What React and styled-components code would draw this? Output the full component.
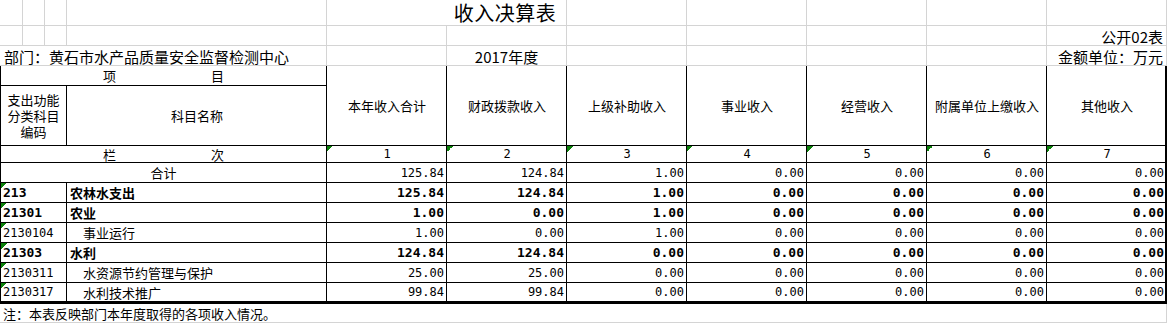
import React from 'react';
import styled, { createGlobalStyle, css } from 'styled-components';

const GRID = '#d4d4d4';
const INK = '#000';
const CJK = '"Noto Sans CJK SC", "Noto Sans", sans-serif';
const MONO = '"DejaVu Sans Mono", "Liberation Mono", monospace';

const GlobalStyle = createGlobalStyle`
  *, *::before, *::after { box-sizing: border-box; }
  html, body { margin: 0; padding: 0; background: #fff; }
  body { font-family: ${CJK}; color: #000; }
`;

const Sheet = styled.div`
  display: grid;
  width: 1167px;
  grid-template-columns: 23px 22px 22px 260px repeat(7, 120px);
  grid-template-rows: 26px 20px 20px 20px 60px 17px repeat(6, 20px) 21px 19px;
`;

const alignMap = { left: 'flex-start', right: 'flex-end', center: 'center' };

const Cell = styled.div`
  grid-column: span ${(p) => p.$span || 1};
  grid-row: span ${(p) => p.$rows || 1};
  display: flex;
  justify-content: ${(p) => alignMap[p.$align || 'center']};
  min-width: 0;
  overflow: hidden;
  white-space: nowrap;
  line-height: 1;
`;

const GridCell = styled(Cell)`
  align-items: flex-end;
  padding: 0 3px 1px ${(p) => (p.$padLeft != null ? p.$padLeft : 3)}px;
  font-size: 15px;
  border-bottom: 1px solid ${GRID};
  border-right: 1px solid ${(p) => (p.$open ? 'transparent' : GRID)};
`;

const Title = styled(GridCell)`
  font-size: 20px;
  font-weight: 400;
  line-height: 24px;
  letter-spacing: 0.5px;
  padding-bottom: 0;
  overflow: visible;
`;

const TableCell = styled(Cell)`
  align-items: center;
  font-size: 13px;
  padding: 0 ${(p) => (p.$last ? 1 : 2)}px 0 ${(p) => (p.$indent ? 16 : p.$first ? 2 : 3)}px;
  border-right: ${(p) => (p.$last ? 2 : 1)}px solid ${INK};
  border-bottom: ${(p) => (p.$foot ? 3 : 1)}px solid ${INK};
  ${(p) => p.$first && css`border-left: 1px solid ${INK};`}
  font-weight: ${(p) => (p.$bold ? 700 : 400)};
  ${(p) =>
    p.$tri &&
    css`
      background-image: linear-gradient(135deg, #0a800a 0 50%, transparent 50%);
      background-size: 6px 6px;
      background-repeat: no-repeat;
      background-position: 0 0;
    `}
`;

const Num = styled.span`
  font-family: ${MONO};
  font-size: ${(p) => (p.$bold ? 13 : 12)}px;
  font-weight: ${(p) => (p.$bold ? 700 : 400)};
`;

const Spread = styled.div`
  flex: 1;
  display: flex;
  justify-content: space-between;
  padding: 0 100px 0 100px;
`;

const Stack = styled.div`
  white-space: normal;
  text-align: center;
  line-height: 16px;
  font-size: 13px;
`;

const HeadLabel = styled.span`
  font-size: 13px;
`;

const Note = styled(Cell)`
  grid-column: 1 / -1;
  align-items: center;
  justify-content: flex-start;
  padding: 0 3px;
  font-size: 13px;
  border-bottom: 1px solid ${GRID};
  border-right: 1px solid ${GRID};
`;

const heads = ['本年收入合计', '财政拨款收入', '上级补助收入', '事业收入', '经营收入', '附属单位上缴收入', '其他收入'];

const Z = ['0.00', '0.00', '0.00', '0.00'];
const total = ['125.84', '124.84', '1.00', ...Z];
const rows = [
  { code: '213', name: '农林水支出', bold: true, v: ['125.84', '124.84', '1.00', ...Z] },
  { code: '21301', name: '农业', bold: true, v: ['1.00', '0.00', '1.00', ...Z] },
  { code: '2130104', name: '事业运行', v: ['1.00', '0.00', '1.00', ...Z] },
  { code: '21303', name: '水利', bold: true, v: ['124.84', '124.84', '0.00', ...Z] },
  { code: '2130311', name: '水资源节约管理与保护', v: ['25.00', '25.00', '0.00', ...Z] },
  { code: '2130317', name: '水利技术推广', v: ['99.84', '99.84', '0.00', ...Z] },
];

function EmptyGrid({ n }) {
  return Array.from({ length: n }, (_, i) => <GridCell key={i} />);
}

export default function App() {
  return (
    <>
      <GlobalStyle />
      <Sheet>
        {/* row 0 */}
        <EmptyGrid n={4} />
        <Title $span={2} $padLeft={120}>收入决算表</Title>
        <EmptyGrid n={5} />

        {/* row 1 */}
        <EmptyGrid n={10} />
        <GridCell $align="right">公开02表</GridCell>

        {/* row 2 */}
        <GridCell $span={4} $align="left" $padLeft={4}>部门：黄石市水产品质量安全监督检测中心</GridCell>
        <GridCell />
        <GridCell>2017年度</GridCell>
        <EmptyGrid n={4} />
        <GridCell $align="right">金额单位：万元</GridCell>

        {/* header */}
        <TableCell $span={4} $first>
          <Spread>
            <span>项</span>
            <span>目</span>
          </Spread>
        </TableCell>
        {heads.map((h, i) => (
          <TableCell key={h} $rows={2} $last={i === heads.length - 1}>
            <HeadLabel>{h}</HeadLabel>
          </TableCell>
        ))}
        <TableCell $span={3} $first>
          <Stack>
            支出功能
            <br />
            分类科目
            <br />
            编码
          </Stack>
        </TableCell>
        <TableCell>科目名称</TableCell>

        {/* 栏次 */}
        <TableCell $span={4} $first>
          <Spread>
            <span>栏</span>
            <span>次</span>
          </Spread>
        </TableCell>
        {heads.map((h, i) => (
          <TableCell key={h} $tri $last={i === heads.length - 1}>
            <Num>{i + 1}</Num>
          </TableCell>
        ))}

        {/* 合计 */}
        <TableCell $span={4} $first>合计</TableCell>
        {total.map((v, i) => (
          <TableCell key={i} $align="right" $last={i === 6}>
            <Num>{v}</Num>
          </TableCell>
        ))}

        {rows.map((r, ri) => {
          const foot = ri === rows.length - 1;
          return (
            <React.Fragment key={r.code}>
              <TableCell $span={3} $first $tri $align="left" $foot={foot}>
                <Num $bold={r.bold}>{r.code}</Num>
              </TableCell>
              <TableCell $align="left" $bold={r.bold} $indent={!r.bold} $foot={foot}>
                {r.name}
              </TableCell>
              {r.v.map((v, i) => (
                <TableCell key={i} $align="right" $last={i === 6} $foot={foot}>
                  <Num $bold={r.bold}>{v}</Num>
                </TableCell>
              ))}
            </React.Fragment>
          );
        })}

        <Note>注：本表反映部门本年度取得的各项收入情况。</Note>
      </Sheet>
    </>
  );
}
